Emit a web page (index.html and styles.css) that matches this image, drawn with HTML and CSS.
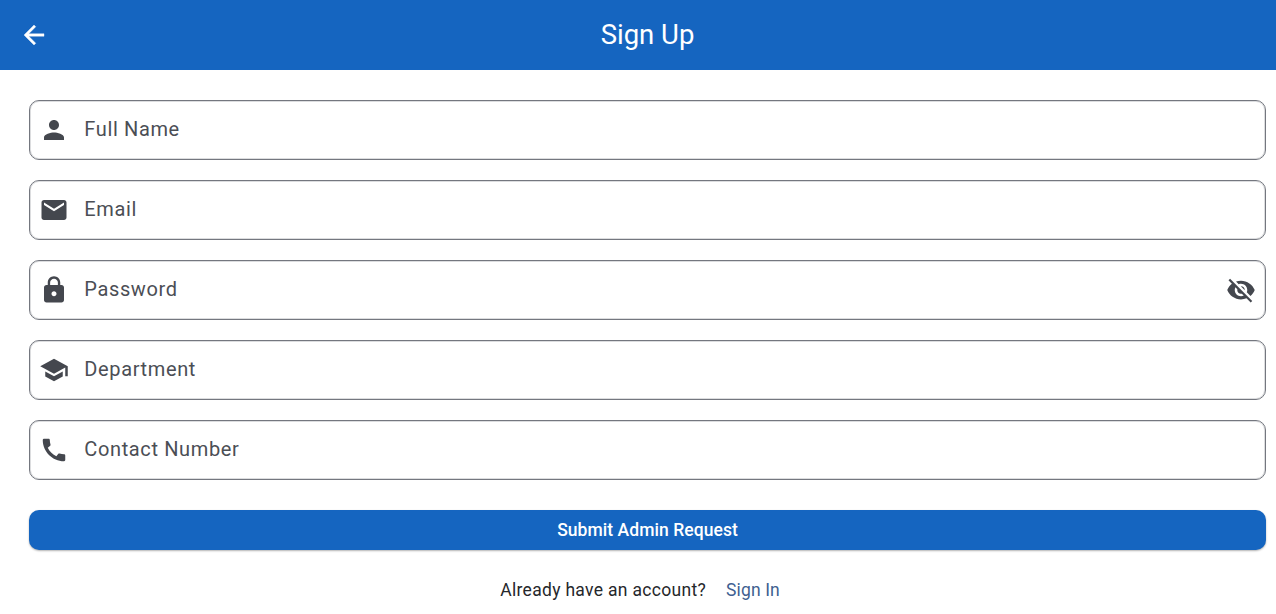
FILE: index.html
```html
<!DOCTYPE html>
<html lang="en">
<head>
<meta charset="utf-8">
<title>Sign Up</title>
<link rel="stylesheet" href="styles.css">
</head>
<body>
<header class="appbar">
  <svg class="icon back" viewBox="0 0 24 24"><path d="M20 11H7.83l5.59-5.59L12 4l-8 8 8 8 1.41-1.41L7.83 13H20v-2z"/></svg>
  <h1 class="title">Sign Up</h1>
</header>
<main class="form">
  <div class="field"><svg class="icon" viewBox="0 0 24 24"><path d="M12 12c2.21 0 4-1.79 4-4s-1.79-4-4-4-4 1.79-4 4 1.79 4 4 4zm0 2c-2.67 0-8 1.34-8 4v2h16v-2c0-2.66-5.33-4-8-4z"/></svg><span class="label">Full Name</span></div>
  <div class="field"><svg class="icon" viewBox="0 0 24 24"><path d="M20 4H4c-1.1 0-1.99.9-1.99 2L2 18c0 1.1.9 2 2 2h16c1.1 0 2-.9 2-2V6c0-1.1-.9-2-2-2zm0 4l-8 5-8-5V6l8 5 8-5v2z"/></svg><span class="label">Email</span></div>
  <div class="field"><svg class="icon" viewBox="0 0 24 24"><path d="M18 8h-1V6c0-2.76-2.24-5-5-5S7 3.240 7 6v2H6c-1.1 0-2 .9-2 2v10c0 1.1.9 2 2 2h12c1.1 0 2-.9 2-2V10c0-1.1-.9-2-2-2zm-6 9c-1.1 0-2-.9-2-2s.9-2 2-2 2 .9 2 2-.9 2-2 2zm3.100-9H8.900V6c0-1.710 1.390-3.100 3.100-3.100s3.100 1.390 3.100 3.100v2z"/></svg><span class="label">Password</span><svg class="icon trailing" viewBox="0 0 24 24"><path d="M12 7c2.76 0 5 2.240 5 5 0 .650-.130 1.260-.360 1.830l2.920 2.920c1.510-1.260 2.700-2.890 3.430-4.750-1.730-4.390-6-7.500-11-7.500-1.400 0-2.740.250-3.980.700l2.160 2.160C10.740 7.130 11.350 7 12 7zM2 4.270l2.280 2.280.460.460C3.080 8.300 1.780 10.020 1 12c1.730 4.390 6 7.500 11 7.500 1.550 0 3.030-.300 4.380-.840l.420.420L19.730 22 21 20.730 3.270 3 2 4.270zM7.530 9.800l1.550 1.550c-.050.210-.080.430-.080.650 0 1.660 1.340 3 3 3 .220 0 .440-.030.650-.080l1.550 1.550c-.670.330-1.410.530-2.200.530-2.760 0-5-2.240-5-5 0-.790.200-1.530.530-2.200zm4.310-.780l3.150 3.150.020-.160c0-1.660-1.340-3-3-3l-.170.010z"/></svg></div>
  <div class="field"><svg class="icon" viewBox="0 0 24 24"><path d="M5 13.180v4L12 21l7-3.820v-4L12 17l-7-3.820zM12 3L1 9l11 6 9-4.910V17h2V9L12 3z"/></svg><span class="label">Department</span></div>
  <div class="field"><svg class="icon" viewBox="0 0 24 24"><path d="M20.010 15.380c-1.230 0-2.420-.200-3.530-.560-.350-.120-.740-.030-1.010.240l-1.570 1.970c-2.830-1.350-5.480-3.900-6.890-6.830l1.950-1.660c.270-.280.350-.670.240-1.020-.370-1.110-.560-2.300-.560-3.530 0-.540-.450-.990-.990-.990H4.190C3.650 3 3 3.240 3 3.990 3 13.280 10.730 21 20.010 21c.710 0 .990-.630.990-1.180v-3.450c0-.540-.450-.990-.990-.990z"/></svg><span class="label">Contact Number</span></div>
  <button class="submit" type="button">Submit Admin Request</button>
  <p class="footer"><span class="question">Already have an account?</span><a class="signin">Sign In</a></p>
</main>
</body>
</html>
```
FILE: styles.css
```css
* { box-sizing: border-box; }
body { margin: 0; height: 614px; overflow: hidden; background: #fff; font-family: Roboto, sans-serif; }
.icon { display: block; width: 30px; height: 30px; flex: none; fill: #44474e; }
.appbar { height: 70px; padding: 0 19px; display: grid; grid-template-columns: 30px 1fr 11px; align-items: center; background: #1565c0; color: #fff; }
.appbar .back { fill: #fff; stroke: #fff; stroke-width: .3; }
.title { margin: 0; padding-bottom: 2px; font-size: 27.5px; line-height: 35px; font-weight: 400; text-align: center; }
.form { padding: 30px 10px 0 29px; display: flex; flex-direction: column; gap: 20px; }
.field { height: 60px; padding: 0 9px; display: flex; align-items: center; border: 1px solid #74777f; border-radius: 10px; box-shadow: inset 0 0 0 1px rgba(116,119,127,.25); }
.label { padding: 0 0 2px 15.300px; font-size: 20px; line-height: 30px; letter-spacing: .63px; color: #4b4e55; }
.trailing { margin-left: auto; }
.submit { height: 40px; margin: 10px 0 0; border: 0; border-radius: 10px; background: #1565c0; color: #fff; font: 500 17.5px/25px Roboto, sans-serif; letter-spacing: .06px; box-shadow: 0 1px 2px rgba(0,0,0,.3); }
.footer { margin: 8px 0 0; padding-right: 15px; display: flex; justify-content: center; gap: 20px; font-size: 17.5px; line-height: 25px; }
.question { color: #25272b; letter-spacing: .31px; }
.signin { color: #415f91; letter-spacing: .125px; }
```
